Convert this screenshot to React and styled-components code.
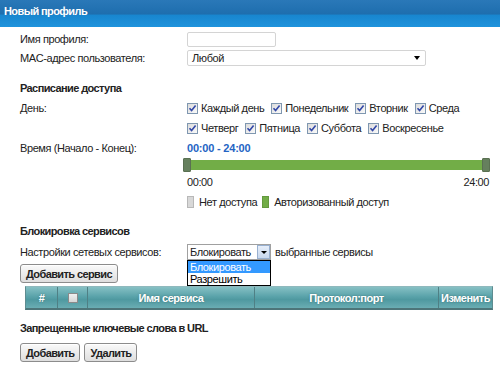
import React from "react";
import styled, { createGlobalStyle } from "styled-components";

const Global = createGlobalStyle`
  html, body { margin: 0; padding: 0; background: #fff; }
  body { font-family: "Liberation Sans", Arial, sans-serif; font-size: 11px; letter-spacing: -0.4px; color: #222; }
  * { box-sizing: border-box; }
`;

const Page = styled.div`
  width: 500px;
  height: 366px;
  overflow: hidden;
  position: relative;
`;

const Header = styled.div`
  height: 27px;
  padding-left: 4px;
  display: flex;
  align-items: center;
  padding-bottom: 6px;
  color: #fff;
  font-weight: bold;
  font-size: 11px;
  letter-spacing: -0.6px;
  background: linear-gradient(#2a78b8 0%, #1e6eae 52%, #1886cf 56%, #1f93dc 100%);
`;

const Content = styled.div`
  padding: 0 8px 0 20px;
  display: flex;
  flex-direction: column;
`;

const Row = styled.div`
  display: grid;
  grid-template-columns: 167px 1fr;
  align-items: center;
  min-height: 16px;
  margin-top: ${(p) => p.$mt || 0}px;
`;

const Label = styled.div`
  white-space: nowrap;
`;

const SectionTitle = styled.div`
  font-weight: bold;
  letter-spacing: -0.6px;
  height: 16px;
  line-height: 16px;
  margin-top: ${(p) => p.$mt || 0}px;
`;

const TextInput = styled.div`
  width: 89px;
  height: 15px;
  border: 1px solid #d4d4d4;
  border-radius: 2px;
  background: #fff;
`;

const WideSelect = styled.div`
  width: 239px;
  height: 16px;
  border: 1px solid #d4d4d4;
  border-radius: 2px;
  display: flex;
  align-items: center;
  justify-content: space-between;
  padding: 0 5px 0 4px;
`;

const Arrow = styled.span`
  width: 0;
  height: 0;
  border-left: 3.5px solid transparent;
  border-right: 3.5px solid transparent;
  border-top: 4px solid #000;
`;

const Checks = styled.div`
  display: flex;
  align-items: center;
  column-gap: 7px;
`;

const CheckItem = styled.label`
  display: flex;
  align-items: center;
  gap: 3px;
  white-space: nowrap;
`;

const Box = styled.span`
  width: 11px;
  height: 11px;
  border: 1px solid #7f97b0;
  background: linear-gradient(135deg, #dcdcdc, #fafafa);
  display: inline-flex;
  align-items: center;
  justify-content: center;
`;

const Check = () => (
  <Box>
    <svg width="9" height="9" viewBox="0 0 9 9">
      <path d="M1.5 4.2 L3.6 6.6 L7.6 1.6" fill="none" stroke="#3348a8" strokeWidth="1.6" />
    </svg>
  </Box>
);

const TimeValue = styled.div`
  color: #2464c4;
  font-weight: bold;
  letter-spacing: -0.2px;
`;

const Slider = styled.div`
  position: relative;
  margin: 1px 0 0 163px;
  width: 307px;
  height: 16px;
  display: flex;
  align-items: center;
`;

const Track = styled.div`
  flex: 1;
  height: 10px;
  background: #72ad47;
`;

const Handle = styled.span`
  position: absolute;
  top: 1px;
  ${(p) => (p.$right ? "right: 0;" : "left: 0;")}
  width: 8px;
  height: 14px;
  background: #66805e;
  border: 1px solid #5a7052;
  border-radius: 1px;
`;

const Scale = styled.div`
  margin: 2px 0 0 167px;
  width: 302px;
  display: flex;
  justify-content: space-between;
  height: 14px;
  line-height: 14px;
`;

const Legend = styled.div`
  margin: 5px 0 0 167px;
  display: flex;
  align-items: center;
  height: 16px;
`;

const Swatch = styled.span`
  width: 7px;
  height: 12px;
  margin-right: 5px;
  background: ${(p) => p.$c};
  border: 1px solid ${(p) => p.$b};
`;

const LegendText = styled.span`
  margin-right: 5px;
`;

const SelectWrap = styled.div`
  display: flex;
  align-items: center;
  gap: 4px;
`;

const MiniSelect = styled.div`
  position: relative;
  width: 84px;
  height: 16px;
  display: flex;
  border: 1px solid #a0a0a0;
  background: #fff;
`;

const SelText = styled.div`
  flex: 1;
  padding-left: 2px;
  line-height: 14px;
`;

const SelButton = styled.div`
  width: 13px;
  background: linear-gradient(#e6eefa, #c8d8ee);
  border: 1px solid #98b0d0;
  display: flex;
  align-items: center;
  justify-content: center;
`;

const SmallArrow = styled.span`
  width: 0;
  height: 0;
  border-left: 3px solid transparent;
  border-right: 3px solid transparent;
  border-top: 3px solid #000;
`;

const DropList = styled.div`
  position: absolute;
  left: -1px;
  top: 15px;
  width: 84px;
  border: 1px solid #000;
  background: #fff;
  z-index: 5;
`;

const Option = styled.div`
  height: 12px;
  line-height: 12px;
  padding-left: 2px;
  background: ${(p) => (p.$active ? "#3399ff" : "#fff")};
  color: ${(p) => (p.$active ? "#fff" : "#000")};
`;

const Buttons = styled.div`
  display: flex;
  gap: 4px;
  margin-top: ${(p) => p.$mt || 0}px;
`;

const Button = styled.button`
  font-family: "Liberation Sans", Arial, sans-serif;
  font-size: 11px;
  font-weight: bold;
  letter-spacing: -0.6px;
  color: #222;
  height: ${(p) => p.$h || 19}px;
  padding: 0 5px;
  border: 1px solid #8c8c8c;
  border-radius: 3px;
  background: linear-gradient(#fafafa, #dedede);
  box-shadow: inset 0 1px 0 #fff;
`;

const TableHead = styled.div`
  margin: 3px 0 0 5px;
  width: 468px;
  height: 24px;
  display: grid;
  grid-template-columns: 31px 30px 167px 184px 1fr;
  border: 1px solid #5e8c90;
  border-top-color: #8fb9bd;
  border-bottom: 2px solid #4d7579;
  background: linear-gradient(#86c0c4 0%, #5aa3aa 45%, #4f99a0 60%, #6aadb3 100%);
`;

const HeadCell = styled.div`
  display: flex;
  align-items: center;
  justify-content: center;
  color: #fff;
  font-weight: bold;
  letter-spacing: -0.5px;
  text-shadow: 0 0 2px #3f7478;
  border-left: ${(p) => (p.$first ? "none" : "1px solid #4f8085")};
`;

const HeadBox = styled.span`
  width: 10px;
  height: 10px;
  background: linear-gradient(#f0f0f0, #d6d6d6);
  border: 1px solid #8a8a8a;
`;

const BottomBox = styled.div`
  margin-top: 4px;
  width: 469px;
  height: 10px;
  border: 1px solid #a8a8a8;
  border-bottom: none;
`;

const days1 = ["Каждый день", "Понедельник", "Вторник", "Среда"];
const days2 = ["Четверг", "Пятница", "Суббота", "Воскресенье"];

export default function App() {
  return (
    <Page>
      <Global />
      <Header>Новый профиль</Header>
      <Content>
        <Row $mt={4}>
          <Label>Имя профиля:</Label>
          <TextInput />
        </Row>
        <Row $mt={3}>
          <Label>MAC-адрес пользователя:</Label>
          <WideSelect>
            <span>Любой</span>
            <Arrow />
          </WideSelect>
        </Row>
        <SectionTitle $mt={14}>Расписание доступа</SectionTitle>
        <Row $mt={4}>
          <Label>День:</Label>
          <Checks>
            {days1.map((d) => (
              <CheckItem key={d}>
                <Check />
                {d}
              </CheckItem>
            ))}
          </Checks>
        </Row>
        <Row $mt={4}>
          <Label />
          <Checks>
            {days2.map((d) => (
              <CheckItem key={d}>
                <Check />
                {d}
              </CheckItem>
            ))}
          </Checks>
        </Row>
        <Row $mt={4}>
          <Label>Время (Начало - Конец):</Label>
          <TimeValue>00:00 - 24:00</TimeValue>
        </Row>
        <Slider>
          <Track />
          <Handle />
          <Handle $right />
        </Slider>
        <Scale>
          <span>00:00</span>
          <span>24:00</span>
        </Scale>
        <Legend>
          <Swatch $c="#d8d8d8" $b="#b8b8b8" />
          <LegendText>Нет доступа</LegendText>
          <Swatch $c="#72ad47" $b="#64993e" />
          <LegendText>Авторизованный доступ</LegendText>
        </Legend>
        <SectionTitle $mt={13}>Блокировка сервисов</SectionTitle>
        <Row $mt={5}>
          <Label>Настройки сетевых сервисов:</Label>
          <SelectWrap>
            <MiniSelect>
              <SelText>Блокировать</SelText>
              <SelButton>
                <SmallArrow />
              </SelButton>
              <DropList>
                <Option $active>Блокировать</Option>
                <Option>Разрешить</Option>
              </DropList>
            </MiniSelect>
            <span>выбранные сервисы</span>
          </SelectWrap>
        </Row>
        <Buttons $mt={4}>
          <Button>Добавить сервис</Button>
        </Buttons>
        <TableHead>
          <HeadCell $first>#</HeadCell>
          <HeadCell>
            <HeadBox />
          </HeadCell>
          <HeadCell>Имя сервиса</HeadCell>
          <HeadCell>Протокол:порт</HeadCell>
          <HeadCell>Изменить</HeadCell>
        </TableHead>
        <SectionTitle $mt={10}>Запрещенные ключевые слова в URL</SectionTitle>
        <Buttons $mt={7}>
          <Button>Добавить</Button>
          <Button>Удалить</Button>
        </Buttons>
        <BottomBox />
      </Content>
    </Page>
  );
}
